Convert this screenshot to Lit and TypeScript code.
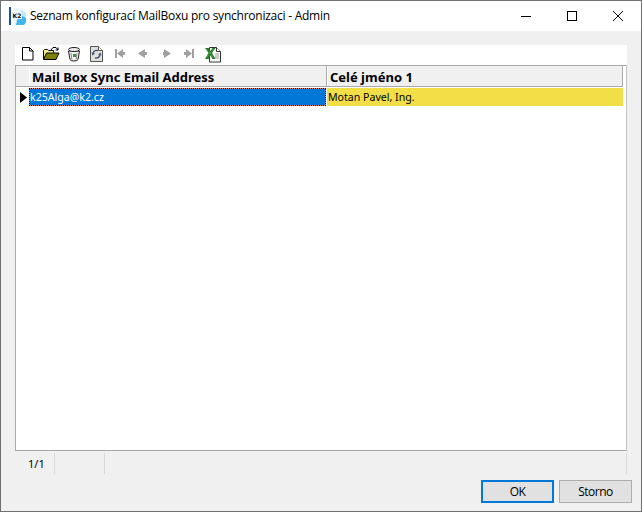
import { LitElement, html, css, svg } from "lit";
import { customElement } from "lit/decorators.js";

const I = (body: unknown) =>
  html`<svg class="ic" width="23" height="20" viewBox="0 0 23 20">${body}</svg>`;

const nav = "#a0a0a0";

@customElement("app-root")
export class AppRoot extends LitElement {
  static styles = css`
    :host { display: block; width: 642px; height: 512px; font-family: "Noto Sans", "Open Sans", sans-serif; }
    .win { box-sizing: border-box; width: 642px; height: 512px; border: 1px solid #6f6f6f; background: #f0f0f0; display: flex; flex-direction: column; }
    .title { height: 30px; background: #fff; display: flex; align-items: center; flex: none; }
    .logo { margin-left: 8px; width: 18px; height: 18px; margin-top: -1px; flex: none; }
    .ttext { margin-left: 3px; font: 12px "Open Sans", "Noto Sans", sans-serif; color: #000; white-space: nowrap; flex: 1; letter-spacing: -0.02em; margin-top: -1px; }
    .wbtns { display: flex; flex: none; }
    .wb { width: 46px; height: 30px; display: flex; align-items: center; justify-content: center; }
    .body { flex: 1; display: flex; flex-direction: column; padding: 14px 9px 0 14px; min-height: 0; }
    .toolbar { height: 20px; margin-right: 5px; background: #fff; display: flex; align-items: center; padding-left: 1px; flex: none; }
    .ic { display: block; flex: none; }
    .grid { height: 386px; margin-right: 5px; box-sizing: border-box; background: #fff; border: 1px solid #a9a9a9; border-right-color: #c4c4c4; flex: none; }
    .hrow, .row { display: grid; grid-template-columns: 13px 298px 296px; width: 607px; }
    .hrow { height: 21px; background: #f0f0f0; border-bottom: 1px solid #a9a9a9; box-sizing: border-box; }
    .hc { font: bold 13px "Noto Sans", sans-serif; color: #000; display: flex; align-items: center; padding: 1px 0 0 3px; white-space: nowrap; border-right: 1px solid #a9a9a9; box-shadow: inset 1px 0 0 #fff; }
    .hc.first { padding: 0; border-right: none; box-shadow: none; }
    .row { height: 18px; margin-top: 1px; }
    .mark { display: flex; align-items: center; padding-left: 4px; background: #fff; }
    .c { font: 10.6px "Noto Sans", sans-serif; display: flex; align-items: center; white-space: nowrap; padding: 0 0 1px 1px; box-sizing: border-box; }
    .c.sel { background: #0078d7; color: #fff; margin-right: 1px; box-shadow: inset 0 0 0 1px #e8802a; outline: 1px dotted #000; outline-offset: -1px; }
    .c.yel { background: #f2de47; color: #000; }
    .status { height: 21px; display: flex; flex: none; margin-top: 2px; font: 11px "Noto Sans", sans-serif; color: #000; }
    .s { box-sizing: border-box; border-right: 1px solid #d8d8d8; display: flex; align-items: center; }
    .s1 { width: 40px; padding-left: 13px; }
    .s2 { width: 50px; }
    .s3 { width: 522px; }
    .btns { flex: 1; display: flex; justify-content: flex-end; gap: 5px; padding-top: 6px; align-items: flex-start; }
    .b { box-sizing: border-box; width: 73px; height: 23px; background: #e1e1e1; border: 1px solid #adadad; font: 12px "Open Sans", "Noto Sans", sans-serif; letter-spacing: -0.04em; color: #000; display: flex; align-items: center; justify-content: center; }
    .b.def { border: 2px solid #0078d7; }
  `;

  render() {
    const newDoc = I(svg`<path d="M6.500 2.500h7l3.500 3.500v9h-10.500z" fill="#fff" stroke="#000"/><path d="M13.500 2.500v3.500h3.500" fill="none" stroke="#000"/>`);
    const open = I(svg`<path d="M4.500 14.500v-9l1-1h3l1 1h5v2" fill="#f7ee8e" stroke="#000"/><path d="M4.500 14.500l3-6.500h12.500l-3 6.500z" fill="#808000" stroke="#000"/><path d="M12 5l2-2.500h3l2 2.500m0 0v-2.500m0 2.500h-2.500" fill="none" stroke="#000"/>`);
    const bin = I(svg`<path d="M6.500 6l1.500 8.500q.5 1.500 4 1.500t4-1.500l1.500-8.500z" fill="#f2f2f2" stroke="#222"/><ellipse cx="12" cy="4.500" rx="5.500" ry="2" fill="#eeeeee" stroke="#222"/><path d="M9 8l.8 6.500M15 8l-.8 6.500" stroke="#888"/><rect x="11" y="9" width="3" height="3" fill="#3a9a3a"/>`);
    const refresh = I(svg`<path d="M5.500 1.500h8l4 4v11h-12z" fill="#dbe3db" stroke="#555"/><path d="M13.500 1.500v4h4" fill="#fff" stroke="#555"/><path d="M8 8q1-3 5-2.500M15 10q-1 3.500-5 3" fill="none" stroke="#46507a" stroke-width="1.300"/><path d="M6.500 7.500l3.500 1-2.500 2zM16.500 10.500l-3.500-1 2.500-2z" fill="#46507a"/>`);
    const first = I(svg`<rect x="7" y="4" width="2" height="9" fill=${nav}/><path d="M9 8.500l6-4.500v9z" fill=${nav}/><rect x="14" y="7" width="3" height="3" fill=${nav}/>`);
    const prev = I(svg`<path d="M7 8.500l7-4.500v9z" fill=${nav}/><rect x="13" y="7" width="3" height="3" fill=${nav}/>`);
    const next = I(svg`<path d="M17 8.500l-7-4.500v9z" fill=${nav}/><rect x="9" y="7" width="2" height="3" fill=${nav}/>`);
    const last = I(svg`<rect x="15" y="4" width="2" height="9" fill=${nav}/><path d="M15 8.500l-6-4.500v9z" fill=${nav}/><rect x="7" y="7" width="3" height="3" fill=${nav}/>`);
    const xls = I(svg`<path d="M9.500 2.500h7l4 4v10.500h-11z" fill="#fff" stroke="#333"/><path d="M16.500 2.500v4h4" fill="#fff" stroke="#333"/><path d="M15 9h4M15 11h4M15 13h4" stroke="#999"/><path d="M5 3h3.500l2 3 2-3h3l-3.500 5 3.500 6h-3l-2-3.500-2 3.500h-3.500l3.500-6z" fill="#1f7a1f"/><path d="M6 4l8 9M14 4l-8 9" stroke="#8cc48c" stroke-width=".9" stroke-dasharray="1 1"/>`);

    return html`<div class="win">
      <div class="title">
        <svg class="logo" viewBox="0 0 18 18">
          <rect x="0" y="0" width="2" height="18" fill="#1d4f9c"/>
          <path d="M5 1h8l4 4v11l-2 2H5z" fill="#eaf6fd"/>
          <path d="M9 9h8v6l-2 3H7z" fill="#3fb6ee"/>
          <path d="M12 3l5 3v5l-4-2z" fill="#bfe7fa"/>
          <rect x="3" y="5" width="10" height="7" fill="#f0f0f0"/>
          <text x="3.500" y="11" font-family="DejaVu Sans" font-size="6" font-weight="bold" fill="#111">K2</text>
        </svg>
        <div class="ttext">Seznam konfigurací MailBoxu pro synchronizaci - Admin</div>
        <div class="wbtns">
          <div class="wb"><svg width="10" height="10" viewBox="0 0 10 10"><path d="M0 5.500h10" stroke="#000"/></svg></div>
          <div class="wb"><svg width="10" height="10" viewBox="0 0 10 10"><rect x=".5" y=".5" width="9" height="9" fill="none" stroke="#000"/></svg></div>
          <div class="wb"><svg width="10" height="10" viewBox="0 0 10 10"><path d="M0 0l10 10M10 0l-10 10" stroke="#000" fill="none"/></svg></div>
        </div>
      </div>
      <div class="body">
        <div class="toolbar">
          ${newDoc}${open}${bin}${refresh}${first}${prev}${next}${last}${xls}
        </div>
        <div class="grid">
          <div class="hrow">
            <div class="hc first"></div>
            <div class="hc">Mail Box Sync Email Address</div>
            <div class="hc">Celé jméno 1</div>
          </div>
          <div class="row">
            <div class="mark"><svg width="7" height="11" viewBox="0 0 7 11"><path d="M0 0l7 5.500-7 5.500z" fill="#000"/></svg></div>
            <div class="c sel">k25Alga@k2.cz</div>
            <div class="c yel">Motan Pavel, Ing.</div>
          </div>
        </div>
        <div class="status">
          <div class="s s1">1/1</div><div class="s s2"></div><div class="s s3"></div>
        </div>
        <div class="btns"><div class="b def">OK</div><div class="b">Storno</div></div>
      </div>
    </div>`;
  }
}
